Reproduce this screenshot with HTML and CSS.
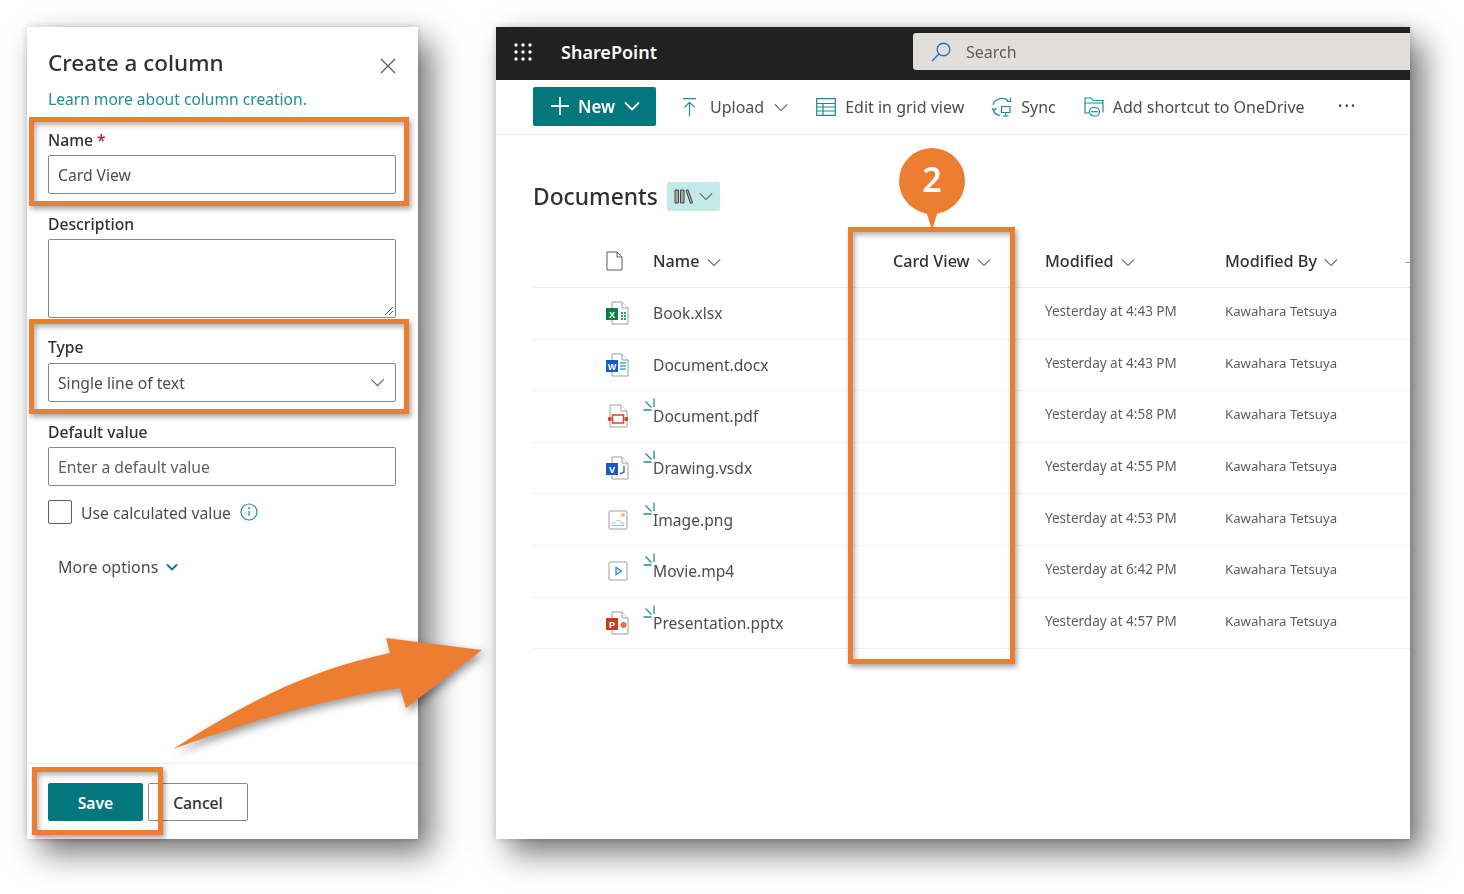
FILE: index.html
```html
<!DOCTYPE html>
<html lang="en">
<head>
  <meta charset="UTF-8">
  <title>Create a column - SharePoint</title>
  <link rel="stylesheet" href="styles.css">
</head>
<body>
<div class="stage">

  <!-- Left window: column panel -->
  <aside class="panel window">
    <div class="panel-head">
      <h2>Create a column</h2>
      <svg class="close" viewBox="0 0 16 16"><path d="M1 1l14 14M15 1L1 15"/></svg>
    </div>
    <a class="learn" href="#">Learn more about column creation.</a>

    <label class="field-label name-label">Name <span class="req">*</span></label>
    <div class="input">Card View</div>

    <label class="field-label">Description</label>
    <div class="input textarea">
      <svg class="grip" viewBox="0 0 10 10"><path d="M1 9l8-8M5 9l4-4"/></svg>
    </div>

    <label class="field-label type-label">Type</label>
    <div class="input select">
      Single line of text
      <svg class="chev" viewBox="0 0 16 10"><path d="M1 1.5l7 7 7-7"/></svg>
    </div>

    <label class="field-label">Default value</label>
    <div class="input placeholder">Enter a default value</div>

    <div class="check-row">
      <span class="checkbox"></span>
      <span>Use calculated value</span>
      <svg class="info" viewBox="0 0 18 18"><circle cx="9" cy="9" r="8"/><path d="M9 8v5"/><circle class="dot" cx="9" cy="5.2" r="1"/></svg>
    </div>

    <div class="more">
      More options
      <svg viewBox="0 0 12 8"><path d="M1 1.5l5 5 5-5"/></svg>
    </div>

    <div class="panel-foot">
      <button class="btn-save">Save</button>
      <button class="btn-cancel">Cancel</button>
    </div>
  </aside>

  <!-- Right window: document library -->
  <main class="library window">
    <header class="suitebar">
      <svg class="waffle" viewBox="0 0 18 18">
        <circle cx="2" cy="2" r="1.7"/><circle cx="9" cy="2" r="1.7"/><circle cx="16" cy="2" r="1.7"/>
        <circle cx="2" cy="9" r="1.7"/><circle cx="9" cy="9" r="1.7"/><circle cx="16" cy="9" r="1.7"/>
        <circle cx="2" cy="16" r="1.7"/><circle cx="9" cy="16" r="1.7"/><circle cx="16" cy="16" r="1.7"/>
      </svg>
      <span class="brand">SharePoint</span>
      <div class="search">
        <svg viewBox="0 0 20 20"><circle cx="12.5" cy="7.5" r="6.3"/><path d="M8 12L1 19"/></svg>
        <span>Search</span>
      </div>
    </header>

    <nav class="toolbar">
      <button class="btn-new">
        <svg class="plus" viewBox="0 0 18 18"><path d="M9 0v18M0 9h18"/></svg>
        New
        <svg class="new-chev" viewBox="0 0 16 10"><path d="M1 1.5l7 7 7-7"/></svg>
      </button>
      <span class="tool tool-upload">
        <svg viewBox="0 0 16 20"><path d="M1 1h14M8 20V5M2.5 10.5L8 5l5.500 5.500"/></svg>
        Upload
        <svg class="chev" viewBox="0 0 16 10"><path d="M1 1.500l7 7 7-7"/></svg>
      </span>
      <span class="tool tool-grid">
        <svg viewBox="0 0 20 18"><path d="M.7.7h18.600v16.600H.7zM.7 5.500h18.600M.7 9h18.600M.7 13h18.600M7 5.500v11.800"/></svg>
        Edit in grid view
      </span>
      <span class="tool tool-sync">
        <svg viewBox="0 0 22 22"><path d="M2 9a9 7.500 0 0 1 15-4.500M19.500 1.500v3.800h-3.800M2 13.500a9 7.500 0 0 0 7 6M1 12l2 2.300L5.500 12"/><path d="M10.500 10.500h8.500v6h-8.500zM14.700 16.500v3M12 20h5.500"/></svg>
        Sync
      </span>
      <span class="tool tool-short">
        <svg viewBox="0 0 21 21"><path d="M5 16H1V1h6l2 2.500h10v12M1 6h18"/><rect x="5.500" y="10.500" width="10" height="8.500" rx="4.200"/><path d="M7 14.700h7"/></svg>
        Add shortcut to OneDrive
      </span>
      <span class="dots">···</span>
    </nav>

    <section class="content">
      <div class="doc-title">
        <h1>Documents</h1>
        <span class="view-pill">
          <svg class="books" viewBox="0 0 19 15"><path d="M1 1h3.500v13H1zM6.500 1H10v13H6.500zM12 1.500l2-.8 4.500 13-2 .8z"/></svg>
          <svg class="chev" viewBox="0 0 16 10"><path d="M1 1.500l7 7 7-7"/></svg>
        </span>
      </div>

      <div class="row head-row">
        <span class="c-icon"><svg class="doc-head" viewBox="0 0 17 20"><path d="M1 1h10l5 5v13H1zM11 1v5h5"/></svg></span>
        <span class="c-name">Name <svg class="chev" viewBox="0 0 16 10"><path d="M1 1.500l7 7 7-7"/></svg></span>
        <span class="c-card">Card View <svg class="chev" viewBox="0 0 16 10"><path d="M1 1.500l7 7 7-7"/></svg></span>
        <span class="c-mod">Modified <svg class="chev" viewBox="0 0 16 10"><path d="M1 1.500l7 7 7-7"/></svg></span>
        <span class="c-by">Modified By <svg class="chev" viewBox="0 0 16 10"><path d="M1 1.500l7 7 7-7"/></svg></span>
      </div>

      <div class="row">
        <span class="c-icon"><svg class="ficon" viewBox="0 0 24 24"><path class="sheet" d="M6 1h10l6 6v16H6z"/><path class="sheet" d="M16 1v6h6"/><path d="M15 11h2v2h-2zM18 11h2v2h-2zM15 14h2v2h-2zM18 14h2v2h-2zM15 17h2v2h-2zM18 17h2v2h-2z" fill="#21a366"/><rect y="7" width="12" height="12" fill="#107c41"/><text x="6" y="16.500" class="flet">X</text></svg></span>
        <span class="c-name">Book.xlsx</span><span></span>
        <span class="c-mod">Yesterday at 4:43 PM</span><span class="c-by">Kawahara Tetsuya</span>
      </div>
      <div class="row">
        <span class="c-icon"><svg class="ficon" viewBox="0 0 24 24"><path class="sheet" d="M6 1h10l6 6v16H6z"/><path class="sheet" d="M16 1v6h6"/><path d="M14 10h6M14 13h6M14 16h6" stroke="#41a5ee" stroke-width="1.500"/><rect y="7" width="12" height="12" fill="#185abd"/><text x="6" y="16.500" class="flet">W</text></svg></span>
        <span class="c-name">Document.docx</span><span></span>
        <span class="c-mod">Yesterday at 4:43 PM</span><span class="c-by">Kawahara Tetsuya</span>
      </div>
      <div class="row">
        <span class="c-icon"><svg class="ficon" viewBox="0 0 24 24"><path class="sheet" d="M4 1h11l6 6v16H4z"/><path class="sheet" d="M15 1v6h6"/><rect x="6.500" y="11" width="11" height="8" fill="#fff" stroke="#d9432f" stroke-width="1.500"/><rect x="2" y="13" width="3.500" height="4" rx="1" fill="#d9432f"/><rect x="18.500" y="13" width="3.500" height="4" rx="1" fill="#d9432f"/></svg></span>
        <span class="c-name"><svg class="fresh" viewBox="0 0 12 13"><path d="M11 .5v8.500M2.500 3.500L8.500 9.500M.5 12h8"/></svg>Document.pdf</span><span></span>
        <span class="c-mod">Yesterday at 4:58 PM</span><span class="c-by">Kawahara Tetsuya</span>
      </div>
      <div class="row">
        <span class="c-icon"><svg class="ficon" viewBox="0 0 24 24"><path class="sheet" d="M6 1h10l6 6v16H6z"/><path class="sheet" d="M16 1v6h6"/><path d="M18 10v6l-4 2" fill="none" stroke="#2b7cd3" stroke-width="1.500"/><rect y="7" width="12" height="12" fill="#185abd"/><text x="6" y="16.500" class="flet">V</text></svg></span>
        <span class="c-name"><svg class="fresh" viewBox="0 0 12 13"><path d="M11 .5v8.500M2.500 3.500L8.500 9.500M.5 12h8"/></svg>Drawing.vsdx</span><span></span>
        <span class="c-mod">Yesterday at 4:55 PM</span><span class="c-by">Kawahara Tetsuya</span>
      </div>
      <div class="row">
        <span class="c-icon"><svg class="ficon" viewBox="0 0 24 24"><rect class="sheet" x="3" y="3" width="18" height="18" rx="1"/><path d="M6 17.500c0-2 1.500-3 3-2.800 1-3 5-3 6 0 1.500-.5 3 .8 3 2.800z" fill="#fff" stroke="#8fcfc4"/><circle cx="17" cy="7" r="2" fill="#f7b955"/></svg></span>
        <span class="c-name"><svg class="fresh" viewBox="0 0 12 13"><path d="M11 .5v8.500M2.500 3.500L8.500 9.500M.5 12h8"/></svg>Image.png</span><span></span>
        <span class="c-mod">Yesterday at 4:53 PM</span><span class="c-by">Kawahara Tetsuya</span>
      </div>
      <div class="row">
        <span class="c-icon"><svg class="ficon" viewBox="0 0 24 24"><rect class="sheet" x="3" y="3" width="18" height="18" rx="1"/><path d="M10 8.500v7l5.500-3.500z" fill="#fff" stroke="#2b88d8" stroke-width="1.300"/></svg></span>
        <span class="c-name"><svg class="fresh" viewBox="0 0 12 13"><path d="M11 .5v8.500M2.500 3.500L8.500 9.500M.5 12h8"/></svg>Movie.mp4</span><span></span>
        <span class="c-mod">Yesterday at 6:42 PM</span><span class="c-by">Kawahara Tetsuya</span>
      </div>
      <div class="row">
        <span class="c-icon"><svg class="ficon" viewBox="0 0 24 24"><path class="sheet" d="M6 1h10l6 6v16H6z"/><path class="sheet" d="M16 1v6h6"/><circle cx="17.500" cy="14" r="3" fill="#ed6c47"/><rect y="7" width="12" height="12" fill="#c43e1c"/><text x="6" y="16.500" class="flet">P</text></svg></span>
        <span class="c-name"><svg class="fresh" viewBox="0 0 12 13"><path d="M11 .5v8.500M2.500 3.500L8.500 9.500M.5 12h8"/></svg>Presentation.pptx</span><span></span>
        <span class="c-mod">Yesterday at 4:57 PM</span><span class="c-by">Kawahara Tetsuya</span>
      </div>
    </section>
  </main>

  <!-- Annotations on top of the windows -->
  <div class="mark mark-name"></div>
  <div class="mark mark-type"></div>
  <div class="mark mark-save"></div>
  <div class="mark mark-card"></div>
  <div class="callout">2</div>
  <svg class="arrow" viewBox="0 0 320 120">
    <path d="M3 112C70 70 130 35 220 16L216 1 312 13 236 71 230 51C150 62 80 85 3 112z"/>
  </svg>
</div>
</body>
</html>
```

FILE: styles.css
```css
* {
  box-sizing: border-box;
}

body {
  margin: 0;
  background: #fff;
  font-family: "Noto Sans", sans-serif;
  color: #323130;
  overflow: hidden;
}

.stage {
  position: relative;
  display: flex;
  gap: 78px;
  width: 1464px;
  height: 894px;
  padding: 27px 0 0 27px;
}

.window {
  height: 812px;
  background: #fff;
  box-shadow: 13px 14px 30px rgba(0,0,0,0.55), 0 0 7px rgba(0,0,0,0.16);
  filter: blur(0.35px);
}

/* panel */
.panel {
  width: 391px;
  padding: 0 22px 0 21px;
  display: flex;
  flex-direction: column;
  font-size: 15.7px;
}

.panel-head {
  display: flex;
  justify-content: space-between;
  align-items: center;
  height: 30px;
  margin-top: 20px;
}

.panel-head h2 {
  margin: 0;
  font-size: 22.5px;
  font-weight: 500;
}

.close {
  width: 16px;
  height: 16px;
  margin: 8px 0 0 0;
  fill: none;
  stroke: #605e5c;
  stroke-width: 1.3;
}

.learn {
  margin-top: 11px;
  line-height: 23px;
  font-size: 15.6px;
  color: #1f9090;
  text-decoration: none;
}

.field-label {
  display: block;
  height: 22px;
  line-height: 22px;
  font-weight: 500;
  margin-top: 19px;
  margin-bottom: 4px;
}

.name-label {
  margin-top: 18px;
}

.type-label {
  margin-top: 18px;
  margin-bottom: 5px;
}

.req {
  color: #a4262c;
}

.input {
  position: relative;
  display: flex;
  align-items: center;
  justify-content: space-between;
  height: 39px;
  padding: 0 10px 0 9px;
  border: 1px solid #8a8886;
  border-radius: 2px;
  color: #4f4d4b;
}

.textarea {
  height: 79px;
}

.grip {
  position: absolute;
  right: 1px;
  bottom: 1px;
  width: 10px;
  height: 10px;
  fill: none;
  stroke: #605e5c;
}

.placeholder {
  color: #605e5c;
}

.chev {
  width: 14px;
  height: 9px;
  fill: none;
  stroke: #605e5c;
  stroke-width: 1.2;
}

.select .chev {
  width: 15px;
}

.check-row {
  display: flex;
  align-items: center;
  margin-top: 14px;
  height: 24px;
  color: #4f4d4b;
}

.check-row span:nth-child(2) {
  padding-top: 2px;
}

.checkbox {
  width: 24px;
  height: 24px;
  border: 1px solid #605e5c;
  border-radius: 2px;
  margin-right: 9px;
}

.info {
  width: 18px;
  height: 18px;
  margin-left: 9px;
  fill: none;
  stroke: #1f9090;
  stroke-width: 1.2;
}

.info .dot {
  fill: #1f9090;
  stroke: none;
}

.more {
  display: flex;
  align-items: center;
  margin: 31px 0 0 10px;
  height: 24px;
  font-size: 16px;
  color: #4f4d4b;
}

.more svg {
  width: 12px;
  height: 8px;
  margin-left: 8px;
  fill: none;
  stroke: #03787c;
  stroke-width: 1.8;
}

.panel-foot {
  display: flex;
  gap: 5px;
  margin: auto -22px 0 -21px;
  padding: 19px 21px 18px;
  border-top: 1px solid #edebe9;
}

.panel-foot button {
  height: 38px;
  padding-top: 2px;
  border-radius: 2px;
  font: 500 15.7px "Noto Sans", sans-serif;
}

.panel-foot .btn-save {
  width: 95px;
  background: #03787c;
  border: 1px solid #03787c;
  color: #fff;
  font-weight: 600;
}

.btn-cancel {
  width: 100px;
  background: #fff;
  border: 1px solid #8a8886;
  color: #323130;
}

/* library */
.library {
  width: 914px;
  display: flex;
  flex-direction: column;
}

.suitebar {
  display: flex;
  align-items: center;
  height: 53px;
  background: #212121;
  color: #fff;
}

.waffle {
  width: 18px;
  height: 18px;
  margin: 0 29px 4px 18px;
  fill: #fff;
}

.brand {
  font-size: 18px;
  font-weight: 600;
  margin-bottom: 4px;
}

.search {
  display: flex;
  align-items: center;
  width: 497px;
  height: 37px;
  margin-left: 256px;
  margin-bottom: 4px;
  padding-left: 18px;
  background: #e1dfdd;
  border-radius: 3px 0 0 3px;
  color: #605e5c;
  font-size: 16px;
}

.search svg {
  width: 20px;
  height: 20px;
  margin-right: 15px;
  fill: none;
  stroke: #2b6fc4;
  stroke-width: 1.4;
}

.toolbar {
  display: flex;
  align-items: center;
  height: 55px;
  padding: 0 0 0 37px;
  border-bottom: 1px solid #edebe9;
  font-size: 16px;
  color: #4f4d4b;
}

.btn-new {
  display: flex;
  align-items: center;
  width: 123px;
  height: 39px;
  padding: 0 0 0 18px;
  margin-bottom: 2px;
  background: #03787c;
  border: 0;
  border-radius: 2px;
  color: #fff;
  font: 600 17px "Noto Sans", sans-serif;
}

.plus {
  width: 18px;
  height: 18px;
  margin-right: 9px;
  fill: none;
  stroke: #fff;
  stroke-width: 1.8;
}

.new-chev {
  width: 16px;
  height: 10px;
  margin-left: 9px;
  fill: none;
  stroke: #fff;
  stroke-width: 1.8;
}

.tool {
  display: flex;
  align-items: center;
}

.tool > svg:first-child {
  fill: none;
  stroke: #1f8c8c;
  stroke-width: 1.2;
}

.tool-upload {
  margin-left: 26px;
}

.tool-upload > svg:first-child {
  width: 15px;
  height: 20px;
  margin-right: 13px;
}

.tool-upload .chev {
  margin-left: 10px;
}

.tool-grid {
  margin-left: 28px;
}

.tool-grid > svg:first-child {
  width: 20px;
  height: 18px;
  margin-right: 9px;
}

.tool-sync {
  margin-left: 27px;
}

.tool-sync > svg:first-child {
  width: 22px;
  height: 22px;
  margin-right: 8px;
}

.tool-short {
  margin-left: 28px;
}

.tool-short > svg:first-child {
  width: 21px;
  height: 21px;
  margin-right: 8px;
}

.dots {
  margin-left: 33px;
  margin-bottom: 4px;
  font-size: 20px;
  letter-spacing: 1px;
}

.content {
  padding-left: 37px;
}

.doc-title {
  display: flex;
  align-items: center;
  height: 40px;
  margin-top: 41px;
}

.doc-title h1 {
  margin: 0;
  font-size: 22.8px;
  font-weight: 500;
}

.view-pill {
  display: flex;
  align-items: center;
  gap: 6px;
  width: 53px;
  height: 29px;
  margin-left: 9px;
  padding-left: 7px;
  background: #c4e9e9;
  border-radius: 2px;
}

.books {
  width: 19px;
  height: 15px;
  fill: #a6a6a6;
  stroke: #484644;
}

.row {
  position: relative;
  display: grid;
  grid-template-columns: 120px 240px 152px 180px 1fr;
  align-items: center;
  height: 51.6px;
  border-bottom: 1px solid #f3f2f1;
  font-size: 15.6px;
  color: #4f4d4b;
}

.head-row {
  margin-top: 21px;
  height: 51px;
  padding-bottom: 2px;
  border-bottom-color: #edebe9;
  color: #323130;
  font-size: 16.2px;
  font-weight: 500;
}

.head-row::after {
  content: "";
  position: absolute;
  right: 0;
  top: 25px;
  width: 5px;
  border-top: 1px solid #a19f9d;
}

.head-row .chev {
  margin-left: 3px;
}

.c-icon {
  padding-left: 73px;
}

.doc-head {
  display: block;
  width: 17px;
  height: 20px;
  fill: none;
  stroke: #605e5c;
  stroke-width: 1;
}

.ficon {
  display: block;
  width: 24px;
  height: 24px;
}

.sheet {
  fill: #fff;
  stroke: #a19f9d;
}

.flet {
  font: 700 9px "Liberation Sans", sans-serif;
  fill: #fff;
  text-anchor: middle;
}

.c-name {
  position: relative;
}

.fresh {
  position: absolute;
  left: -10px;
  top: -7px;
  width: 12px;
  height: 13px;
  fill: none;
  stroke: #1f9090;
  stroke-width: 1.3;
}

.row .c-mod,
.row .c-by {
  padding-bottom: 4px;
  font-size: 13.5px;
  color: #605e5c;
}

.row .c-by {
  font-size: 13.2px;
}

.head-row .c-mod,
.head-row .c-by {
  padding-bottom: 0;
  font-size: 16.2px;
  color: #323130;
}

/* annotations */
.mark {
  position: absolute;
  border: 5px solid #ed7d31;
  box-shadow: 2px 3px 5px rgba(0,0,0,0.35), inset 2px 3px 5px rgba(0,0,0,0.3);
}

.mark-name {
  left: 29px;
  top: 117px;
  width: 380px;
  height: 89px;
}

.mark-type {
  left: 29px;
  top: 319px;
  width: 380px;
  height: 95px;
}

.mark-save {
  left: 32px;
  top: 767px;
  width: 131px;
  height: 68px;
}

.mark-card {
  left: 848px;
  top: 227px;
  width: 167px;
  height: 437px;
}

.callout {
  position: absolute;
  left: 899px;
  top: 148px;
  width: 66px;
  height: 66px;
  border-radius: 50%;
  background: #ed7d31;
  color: #fff;
  font-size: 34px;
  font-weight: 600;
  line-height: 62px;
  text-align: center;
}

.callout::after {
  content: "";
  position: absolute;
  left: 26px;
  top: 60px;
  border-left: 7px solid transparent;
  border-right: 7px solid transparent;
  border-top: 22px solid #ed7d31;
}

.arrow {
  position: absolute;
  left: 170px;
  top: 637px;
  width: 320px;
  height: 120px;
  fill: #ed7d31;
  filter: drop-shadow(3px 4px 4px rgba(0,0,0,0.4));
}
```
